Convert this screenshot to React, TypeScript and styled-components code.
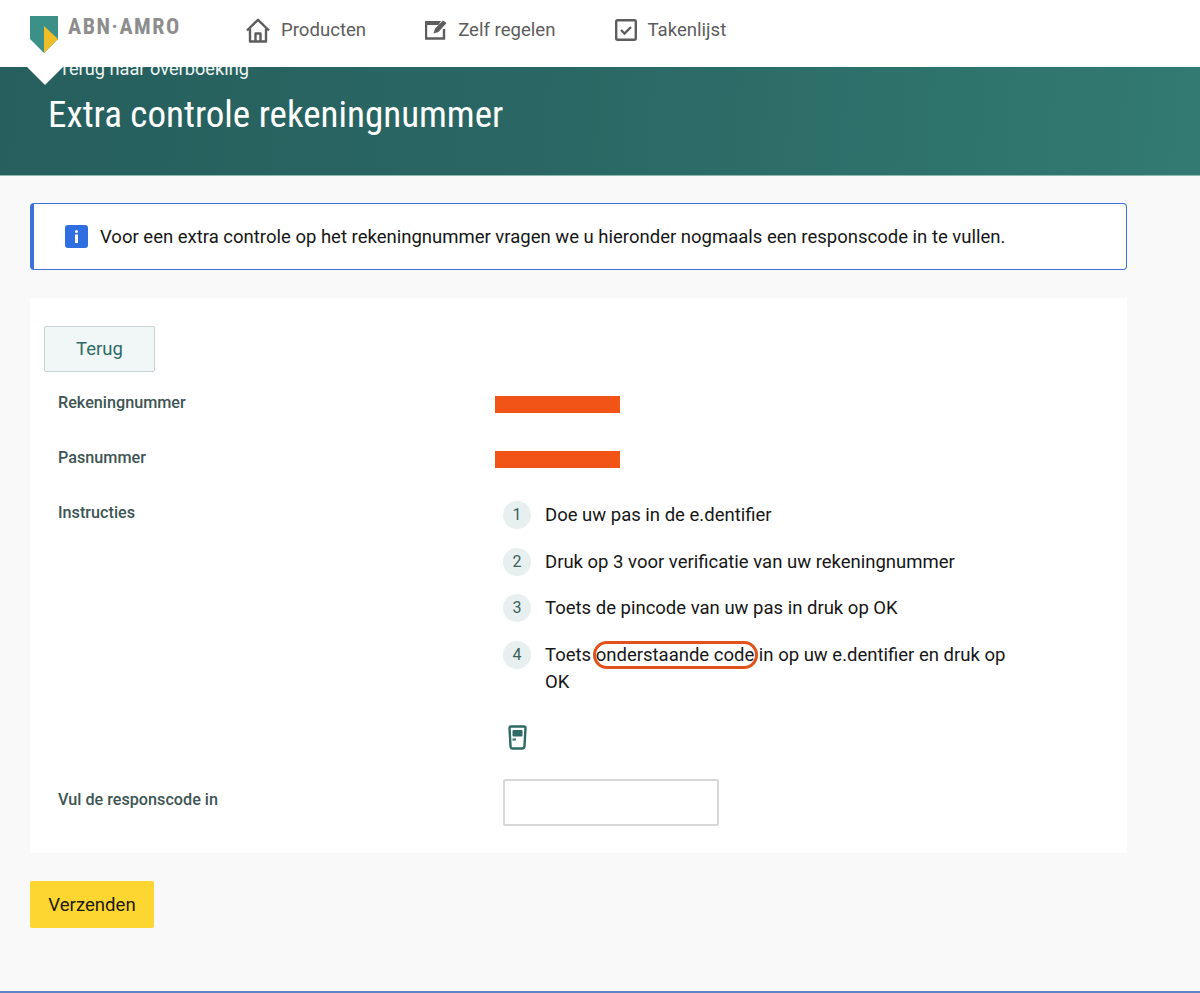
import React from "react";
import styled, { createGlobalStyle } from "styled-components";

const Global = createGlobalStyle`
  html, body { margin: 0; padding: 0; background: #f9f9f9; }
  body { font-family: Roboto, "Liberation Sans", sans-serif; color: #1b1b1b; }
  * { box-sizing: border-box; }
`;

const Page = styled.div`
  display: flex;
  flex-direction: column;
  min-height: 993px;
  border-bottom: 2px solid #5f84c4;
  overflow: hidden;
`;
const Header = styled.header`
  position: relative;
  z-index: 2;
  height: 67px;
  background: #fff;
  display: flex;
  align-items: flex-start;
  padding: 16px 0 0 30px;
  &::after {
    content: "";
    position: absolute;
    left: 27px;
    top: 67px;
    border-left: 18px solid transparent;
    border-right: 18px solid transparent;
    border-top: 18px solid #fff;
  }
`;
const Logo = styled.div`
  display: flex;
  align-items: flex-start;
  gap: 10px;
  width: 216px;
`;
const LogoText = styled.span`
  font-weight: 700;
  font-size: 22px;
  line-height: 22px;
  letter-spacing: 1.55px;
  color: #8d8d8d;
  white-space: nowrap;
  font-stretch: 75%;
`;
const Nav = styled.nav`
  display: flex;
  gap: 59px;
  padding-top: 1px;
`;
const NavItem = styled.a`
  display: flex;
  align-items: center;
  gap: 11px;
  height: 26px;
  font-size: 18.6px;
  color: #5d5d5d;
`;
const Hero = styled.section`
  height: 109px;
  background: linear-gradient(95deg, #265f5d 0%, #2a6764 45%, #327a72 100%);
  padding-left: 48px;
  color: #fff;
  border-bottom: 1px solid #8fb8b2;
`;
const BackLink = styled.a`
  display: block;
  margin: -8px 0 0 11px;
  font-size: 18.2px;
  line-height: 20px;
  color: #eef5f4;
`;
const Title = styled.h1`
  margin: 13px 0 0;
  font-size: 37px;
  line-height: 46px;
  font-weight: 400;
  font-stretch: 87%;
  white-space: nowrap;
`;
const Main = styled.main`
  flex: 1;
  padding: 27px 73px 0 30px;
`;
const Alert = styled.div`
  height: 67px;
  background: #fff;
  border: 1px solid #3d72d9;
  border-left-width: 4px;
  border-radius: 4px;
  display: flex;
  align-items: center;
  gap: 12px;
  padding-left: 31px;
  font-size: 18.5px;
  color: #161616;
`;
const InfoBadge = styled.span`
  width: 23px;
  height: 23px;
  border-radius: 3px;
  background: #2f6ee0;
  display: flex;
  align-items: center;
  justify-content: center;
`;
const Card = styled.section`
  margin-top: 28px;
  height: 555px;
  background: #fff;
  padding: 28px 14px 27px;
`;
const GhostButton = styled.button`
  display: block;
  width: 111px;
  height: 46px;
  background: #f0f7f6;
  border: 1px solid #c6d4d3;
  border-radius: 2px;
  font: 400 18.5px Roboto, sans-serif;
  color: #2e6b66;
`;
const Row = styled.div<{ $top: number }>`
  display: grid;
  grid-template-columns: 445px 1fr;
  padding-left: 14px;
  margin-top: ${(p) => p.$top}px;
`;
const Label = styled.div<{ $offset?: number }>`
  font-size: 16.2px;
  font-weight: 500;
  line-height: 26px;
  color: #3d5654;
  padding-top: ${(p) => p.$offset ?? 0}px;
`;
const Redaction = styled.div`
  width: 125px;
  height: 17px;
  margin: 6px 0 1px -8px;
  background: #f25316;
`;
const Steps = styled.ol`
  list-style: none;
  margin: 1px 0 0;
  padding: 0;
  width: 510px;
  display: flex;
  flex-direction: column;
  gap: 18px;
`;
const Step = styled.li`
  display: flex;
  gap: 14px;
  font-size: 18.5px;
  line-height: 27.5px;
  color: #161616;
`;
const StepText = styled.span`
  padding-top: 1px;
`;
const StepNum = styled.span`
  flex: none;
  width: 28px;
  height: 28px;
  border-radius: 50%;
  background: #e8f0ef;
  color: #3a5f5c;
  font-size: 16px;
  display: flex;
  align-items: center;
  justify-content: center;
`;
const Circled = styled.span`
  position: relative;
  &::after {
    content: "";
    position: absolute;
    left: -3px;
    right: -4px;
    top: -3px;
    bottom: -3px;
    border: 3px solid #e4521c;
    border-radius: 15px;
  }
`;
const Device = styled.div`
  margin: 28px 0 0 5px;
  height: 26px;
`;
const Input = styled.input`
  display: block;
  width: 216px;
  height: 47px;
  border: 2px solid #d6d8d8;
  border-radius: 2px;
  background: #fff;
`;
const Submit = styled.button`
  display: block;
  margin-top: 28px;
  width: 124px;
  height: 47px;
  background: #fdd631;
  border: 0;
  border-radius: 2px;
  font: 400 18.6px Roboto, sans-serif;
  color: #1f1a08;
`;

const HomeIcon = () => (
  <svg width="24" height="25" viewBox="0 0 24 25" fill="none" stroke="#5d5d5d" strokeWidth="2.4" strokeLinejoin="round">
    <path d="M1 12.500 12 1.800l11 10.700" />
    <path d="M4 10.500V23.500h16V10.500" />
    <path d="M9.500 23.500v-8h5v8" />
  </svg>
);
const EditIcon = () => (
  <svg width="22" height="20" viewBox="0 0 22 20" fill="none">
    <path d="M1 3.500V18.500h18V9" stroke="#5d5d5d" strokeWidth="2.4" />
    <path d="M0 1h16l-2.500 4H0z" fill="#5d5d5d" />
    <path d="M18 .5 21.500 3l-8 9-5 1.500 1.500-5z" fill="#5d5d5d" />
  </svg>
);
const CheckIcon = () => (
  <svg width="22" height="22" viewBox="0 0 22 22" fill="none" stroke="#5d5d5d" strokeWidth="2.4">
    <rect x="1.200" y="1.200" width="19.600" height="19.600" rx="1.500" />
    <path d="M6 11l3.500 3.500L16 8" />
  </svg>
);

export default function App() {
  return (
    <Page>
      <Global />
      <Header>
        <Logo>
          <svg width="28" height="37" viewBox="0 0 28 37">
            <path d="M0 0h28v23L14 37 0 23z" fill="#3b9088" />
            <path d="M14 10l14 13-14 14z" fill="#f0bd28" />
          </svg>
          <LogoText>ABN·AMRO</LogoText>
        </Logo>
        <Nav>
          <NavItem><HomeIcon />Producten</NavItem>
          <NavItem><EditIcon />Zelf regelen</NavItem>
          <NavItem><CheckIcon />Takenlijst</NavItem>
        </Nav>
      </Header>
      <Hero>
        <BackLink>Terug naar overboeking</BackLink>
        <Title>Extra controle rekeningnummer</Title>
      </Hero>
      <Main>
        <Alert>
          <InfoBadge>
            <svg width="5" height="13" viewBox="0 0 5 13" fill="#fff">
              <circle cx="2.500" cy="1.600" r="1.500" />
              <rect x="1" y="4.500" width="3" height="8.500" />
            </svg>
          </InfoBadge>
          Voor een extra controle op het rekeningnummer vragen we u hieronder nogmaals een responscode in te vullen.
        </Alert>
        <Card>
          <GhostButton>Terug</GhostButton>
          <Row $top={18}>
            <Label>Rekeningnummer</Label>
            <Redaction />
          </Row>
          <Row $top={29}>
            <Label>Pasnummer</Label>
            <Redaction />
          </Row>
          <Row $top={29}>
            <Label>Instructies</Label>
            <div>
              <Steps>
                <Step><StepNum>1</StepNum><StepText>Doe uw pas in de e.dentifier</StepText></Step>
                <Step><StepNum>2</StepNum><StepText>Druk op 3 voor verificatie van uw rekeningnummer</StepText></Step>
                <Step><StepNum>3</StepNum><StepText>Toets de pincode van uw pas in druk op OK</StepText></Step>
                <Step><StepNum>4</StepNum><StepText>Toets <Circled>onderstaande code</Circled> in op uw e.dentifier en druk op OK</StepText></Step>
              </Steps>
              <Device>
                <svg width="19" height="25" viewBox="0 0 19 25" fill="none">
                  <path d="M3 1.500h13q1.500 0 1.500 1.500l-1 18q0 2.500-2.500 2.500H5q-2.500 0-2.500-2.500l-1-18Q1.500 1.500 3 1.500z" stroke="#2c6b66" strokeWidth="2.400" />
                  <rect x="4.500" y="5" width="10" height="6.500" rx="1" fill="#2c6b66" />
                  <rect x="4.500" y="13.500" width="3.500" height="2" fill="#2c6b66" />
                </svg>
              </Device>
            </div>
          </Row>
          <Row $top={28}>
            <Label $offset={8}>Vul de responscode in</Label>
            <Input aria-label="Responscode" />
          </Row>
        </Card>
        <Submit>Verzenden</Submit>
      </Main>
    </Page>
  );
}
